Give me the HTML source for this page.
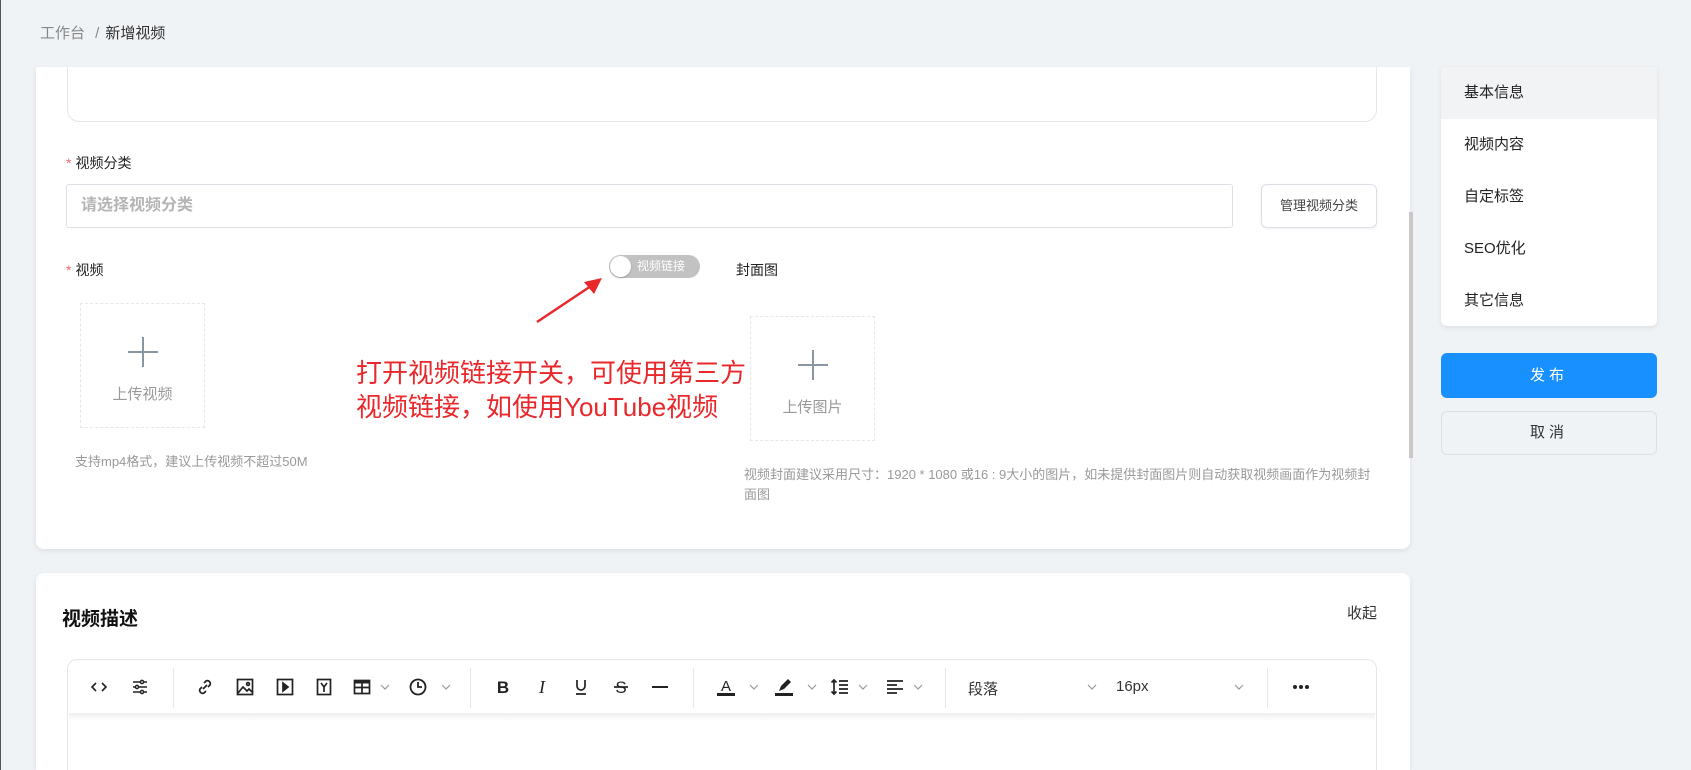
<!DOCTYPE html>
<html><head><meta charset="utf-8">
<style>
*{margin:0;padding:0;box-sizing:border-box}
html,body{width:1691px;height:770px;overflow:hidden}
body{background:#f0f3f6;font-family:"Liberation Sans","Noto Sans CJK SC",sans-serif;position:relative;color:#333}
.a{position:absolute}
.card{background:#fff;border-radius:8px;box-shadow:0 2px 6px rgba(0,0,0,.08)}
.lbl{font-size:14px;color:#222}
.lbl b{color:#f56c6c;font-weight:normal;margin-right:4px}
.up{border:1px dashed #e6e6e6;background:#fff;text-align:center;color:#999;font-size:15px}
.up .p{position:absolute;left:50%;top:33px;width:30px;height:30px;margin-left:-15px}
.up .p:before,.up .p:after{content:"";position:absolute;background:#8a95a5}
.up .p:before{left:14px;top:0;width:2px;height:30px}
.up .p:after{top:14px;left:0;height:2px;width:30px}
.tb svg{position:absolute;top:677px;width:20px;height:20px}
.dd{position:absolute;top:680px;width:10px;height:14px}
.sep{position:absolute;top:668px;width:1px;height:40px;background:#e8e8e8}
.nav div{height:52px;line-height:52px;padding-left:23px;font-size:15px;color:#222}
</style></head><body>
<div class="a" style="left:0;top:0;width:1px;height:770px;background:#555"></div>
<div class="a" style="left:40px;top:22px;font-size:15px;color:#888">工作台 <span style="margin:0 6px">/</span><span style="color:#333">新增视频</span></div>

<div class="a card" style="left:36px;top:67px;width:1374px;height:482px;border-radius:0 0 8px 8px"></div>
<div class="a" style="left:67px;top:67px;width:1310px;height:55px;border:1px solid #e4e6ea;border-top:none;border-radius:0 0 12px 12px;background:#fff"></div>

<div class="a lbl" style="left:66px;top:153px"><b>*</b>视频分类</div>
<div class="a" style="left:66px;top:184px;width:1167px;height:44px;border:1px solid #dcdfe6;border-radius:3px;background:#fff;padding-left:14px;line-height:42px;font-size:16px;color:#b4b4b4;font-weight:bold">请选择视频分类</div>
<div class="a" style="left:1261px;top:184px;width:116px;height:44px;border:1px solid #dcdfe6;border-radius:6px;background:#fff;text-align:center;line-height:42px;font-size:13px;color:#444;box-shadow:0 1px 3px rgba(0,0,0,.06)">管理视频分类</div>

<div class="a lbl" style="left:66px;top:260px"><b>*</b>视频</div>
<div class="a" style="left:609px;top:255px;width:91px;height:23px;border-radius:12px;background:#c2c2c2;color:#fff;font-size:12px;line-height:23px;padding-left:28px">视频链接</div>
<div class="a" style="left:610px;top:256px;width:21px;height:21px;border-radius:50%;background:#fff;box-shadow:0 1px 2px rgba(0,0,0,.2)"></div>
<div class="a lbl" style="left:736px;top:260px">封面图</div>

<div class="a up" style="left:80px;top:303px;width:125px;height:125px"><div class="p"></div><div style="position:absolute;top:79px;width:100%">上传视频</div></div>
<div class="a" style="left:75px;top:451px;font-size:13px;color:#999">支持mp4格式，建议上传视频不超过50M</div>

<svg class="a" style="left:530px;top:270px" width="80" height="56"><line x1="7" y1="52" x2="64" y2="14" stroke="#e8282b" stroke-width="2.5"/><polygon points="72,8 54,12 64,24" fill="#e8282b"/></svg>
<div class="a" style="left:356px;top:356px;font-size:26px;line-height:34px;color:#e8282b;white-space:nowrap">打开视频链接开关，可使用第三方<br>视频链接，如使用YouTube视频</div>

<div class="a up" style="left:750px;top:316px;width:125px;height:125px"><div class="p"></div><div style="position:absolute;top:79px;width:100%">上传图片</div></div>
<div class="a" style="left:744px;top:465px;width:630px;font-size:13px;line-height:20px;color:#999">视频封面建议采用尺寸：1920 * 1080 或16 : 9大小的图片，如未提供封面图片则自动获取视频画面作为视频封面图</div>

<div class="a" style="left:1409px;top:212px;width:4px;height:246px;background:#c8c8c8"></div>

<div class="a card nav" style="left:1441px;top:67px;width:216px;height:259px;overflow:hidden;border-radius:0 0 6px 6px">
<div style="background:#f2f3f5">基本信息</div><div>视频内容</div><div>自定标签</div><div>SEO优化</div><div>其它信息</div></div>
<div class="a" style="left:1441px;top:353px;width:216px;height:45px;background:#1890ff;border-radius:6px;color:#fff;text-align:center;line-height:45px;font-size:15px;letter-spacing:4px">发布</div>
<div class="a" style="left:1441px;top:411px;width:216px;height:44px;background:#f0f3f6;border:1px solid #dcdfe6;border-radius:6px;color:#333;text-align:center;line-height:42px;font-size:15px;letter-spacing:4px">取消</div>

<div class="a card" style="left:36px;top:573px;width:1374px;height:197px;border-radius:8px 8px 0 0"></div>
<div class="a" style="left:62px;top:604px;font-size:19px;font-weight:bold;color:#111">视频描述</div>
<div class="a" style="left:1347px;top:602px;font-size:15px;color:#333">收起</div>
<div class="a" style="left:67px;top:659px;width:1310px;height:111px;border:1px solid #e4e6ea;border-bottom:none;border-radius:10px 10px 0 0;background:#fff"></div>
<div class="a" style="left:69px;top:713px;width:1306px;height:8px;background:linear-gradient(#eee,#fff)"></div>

<div class="tb">
<svg style="left:89px" viewBox="0 0 20 20" fill="none" stroke="#222" stroke-width="1.6"><path d="M7 6l-4 4 4 4M13 6l4 4-4 4"/></svg>
<svg style="left:130px" viewBox="0 0 20 20" fill="none" stroke="#222" stroke-width="1.5"><path d="M3 5h14M3 10h14M3 15h14"/><circle cx="12" cy="5" r="1.6" fill="#fff"/><circle cx="7" cy="10" r="1.6" fill="#fff"/><circle cx="12" cy="15" r="1.6" fill="#fff"/></svg>
<div class="sep" style="left:173px"></div>
<svg style="left:195px" viewBox="0 0 20 20" fill="none" stroke="#222" stroke-width="1.7"><path d="M9 6l2-2a3 3 0 014 4l-2 2M11 14l-2 2a3 3 0 01-4-4l2-2M8 12l4-4"/></svg>
<svg style="left:235px" viewBox="0 0 20 20" fill="none" stroke="#222" stroke-width="1.7"><rect x="2.5" y="2.5" width="15" height="15"/><path d="M3 16l5-6 4 4 2-2 3 3"/><circle cx="13" cy="7" r="1.4"/></svg>
<svg style="left:275px" viewBox="0 0 20 20" fill="none" stroke="#222" stroke-width="1.7"><rect x="2.5" y="2.5" width="15" height="15"/><path d="M8 6v8l5-4z" fill="#222"/></svg>
<svg style="left:314px" viewBox="0 0 20 20" fill="none" stroke="#222" stroke-width="1.7"><rect x="3.5" y="2.5" width="13" height="15"/><path d="M7 6l3 4 3-4M10 10v5"/></svg>
<svg style="left:352px" viewBox="0 0 20 20" fill="none" stroke="#222" stroke-width="1.7"><rect x="2.5" y="3.5" width="15" height="13" /><path d="M2.5 5h15" stroke-width="3"/><path d="M10 5v11M2.5 10.5h15"/></svg>
<svg style="left:408px" viewBox="0 0 20 20" fill="none" stroke="#222" stroke-width="1.8"><circle cx="10" cy="10" r="7.5"/><path d="M10 5v5h4"/></svg>
<div class="sep" style="left:470px"></div>
<svg style="left:493px" viewBox="0 0 20 20"><text x="10" y="16" text-anchor="middle" font-family="Liberation Sans" font-weight="bold" font-size="17" fill="#222">B</text></svg>
<svg style="left:532px" viewBox="0 0 20 20"><text x="10" y="16" text-anchor="middle" font-family="Liberation Serif" font-style="italic" font-size="18" fill="#222">I</text></svg>
<svg style="left:571px" viewBox="0 0 20 20" fill="none" stroke="#222" stroke-width="1.7"><path d="M6 3v6a4 4 0 008 0V3M5 17h10"/></svg>
<svg style="left:611px" viewBox="0 0 20 20"><text x="10" y="16" text-anchor="middle" font-family="Liberation Sans" font-size="17" fill="#222">S</text><path d="M3 10h14" stroke="#222" stroke-width="1.7"/></svg>
<svg style="left:650px" viewBox="0 0 20 20"><path d="M2 10h16" stroke="#222" stroke-width="2"/></svg>
<div class="sep" style="left:693px"></div>
<svg style="left:716px" viewBox="0 0 20 20"><text x="10" y="14" text-anchor="middle" font-family="Liberation Sans" font-size="15" fill="#222">A</text><rect x="1" y="16" width="18" height="3" fill="#222"/></svg>
<svg style="left:774px" viewBox="0 0 20 20"><path d="M5 14l2-5 7-7 3 3-7 7z" fill="#222"/><rect x="1" y="16" width="18" height="3" fill="#222"/></svg>
<svg style="left:830px" viewBox="0 0 20 20" fill="none" stroke="#222" stroke-width="1.7"><path d="M4 3v14M1.5 5.5L4 3l2.5 2.5M1.5 14.5L4 17l2.5-2.5M9 4h9M9 8h9M9 12h9M9 16h9"/></svg>
<svg style="left:885px" viewBox="0 0 20 20" fill="none" stroke="#222" stroke-width="1.8"><path d="M2 4h16M2 8h10M2 12h16M2 16h10"/></svg>
<div class="sep" style="left:945px"></div>
<div class="sep" style="left:1267px"></div>
<svg style="left:1291px" viewBox="0 0 20 20" fill="#222"><circle cx="4" cy="10" r="2"/><circle cx="10" cy="10" r="2"/><circle cx="16" cy="10" r="2"/></svg>
</div>
<svg class="dd" style="left:380px" viewBox="0 0 10 14" fill="none" stroke="#999" stroke-width="1.2"><path d="M1 5l4 4 4-4"/></svg>
<svg class="dd" style="left:441px" viewBox="0 0 10 14" fill="none" stroke="#999" stroke-width="1.2"><path d="M1 5l4 4 4-4"/></svg>
<svg class="dd" style="left:749px" viewBox="0 0 10 14" fill="none" stroke="#999" stroke-width="1.2"><path d="M1 5l4 4 4-4"/></svg>
<svg class="dd" style="left:807px" viewBox="0 0 10 14" fill="none" stroke="#999" stroke-width="1.2"><path d="M1 5l4 4 4-4"/></svg>
<svg class="dd" style="left:858px" viewBox="0 0 10 14" fill="none" stroke="#999" stroke-width="1.2"><path d="M1 5l4 4 4-4"/></svg>
<svg class="dd" style="left:913px" viewBox="0 0 10 14" fill="none" stroke="#999" stroke-width="1.2"><path d="M1 5l4 4 4-4"/></svg>
<div class="a" style="left:968px;top:678px;font-size:15px;color:#333">段落</div>
<svg class="dd" style="left:1087px" viewBox="0 0 10 14" fill="none" stroke="#999" stroke-width="1.2"><path d="M1 5l4 4 4-4"/></svg>
<div class="a" style="left:1116px;top:678px;font-size:15px;color:#333">16px</div>
<svg class="dd" style="left:1234px" viewBox="0 0 10 14" fill="none" stroke="#999" stroke-width="1.2"><path d="M1 5l4 4 4-4"/></svg>
</body></html>
